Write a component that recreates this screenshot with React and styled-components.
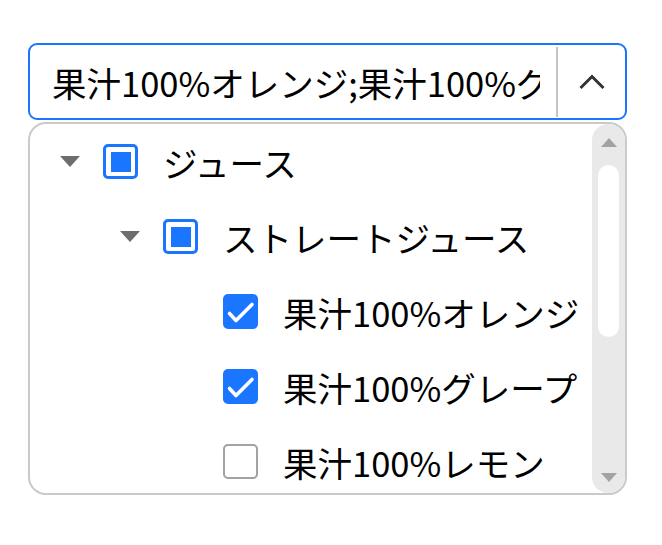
import React from 'react';
import styled, { createGlobalStyle } from 'styled-components';

const Global = createGlobalStyle`
    body {
        margin: 0;
        background: #ffffff;
        font-family: 'Noto Sans CJK JP', 'Noto Sans', sans-serif;
    }
`
const Wrapper = styled.div`
    width: 599px;
    padding: 43px 0 0 28px;
`
const SelectBox = styled.div`
    display: flex;
    align-items: stretch;
    height: 77px;
    box-sizing: border-box;
    border: 2px solid #1b76ff;
    border-radius: 9px;
    background: white;
`
const Value = styled.div`
    flex: 1;
    display: flex;
    align-items: center;
    margin: 0 16px 0 22px;
    overflow: hidden;
    white-space: nowrap;
    font-size: 34.5px;
    color: #000;
`
const Divider = styled.div`
    width: 2px;
    margin: 2px 0 1px;
    background: #c4c4c4;
`
const Toggle = styled.div`
    width: 67px;
    display: flex;
    align-items: center;
    justify-content: center;
`
const Dropdown = styled.div`
    display: flex;
    margin-top: 2px;
    height: 373px;
    box-sizing: border-box;
    border: 2px solid #cacaca;
    border-radius: 18px;
    overflow: hidden;
    background: white;
`
const List = styled.div`
    flex: 1;
    overflow: hidden;
`
const Row = styled.div`
    display: flex;
    align-items: center;
    height: 75px;
    padding-left: ${p => 30 + p.$depth * 60}px;
    font-size: 34.5px;
    color: #000;
    white-space: nowrap;
`
const Caret = styled.span`
    width: 20px;
    height: 11px;
    margin-right: 23px;
    flex-shrink: 0;
    box-sizing: border-box;
    border-left: 10px solid transparent;
    border-right: 10px solid transparent;
    border-top: 11px solid ${p => p.$leaf ? 'transparent' : '#6e6e6e'};
`
const Box = styled.span`
    width: 35px;
    height: 35px;
    flex-shrink: 0;
    box-sizing: border-box;
    border-radius: 5px;
    display: flex;
    align-items: center;
    justify-content: center;
    background: ${p => p.$state === 'checked' ? '#1b76ff' : 'white'};
    border: ${p => p.$state === 'off' ? '2.5px solid #a2a2a2' : p.$state === 'mixed' ? '3px solid #1b76ff' : 'none'};
`
const Mixed = styled.span`
    width: 20px;
    height: 20px;
    background: #1b76ff;
`
const Label = styled.span`
    margin-left: 25px;
`
const Scrollbar = styled.div`
    width: 33px;
    display: flex;
    flex-direction: column;
    align-items: center;
    background: #e9e9e9;
    border-radius: 16px;
`
const Arrow = styled.div`
    height: ${p => p.$h}px;
    display: flex;
    align-items: center;
    justify-content: center;
    &::after {
        content: '';
        border-left: 8px solid transparent;
        border-right: 8px solid transparent;
        ${p => p.$up ? 'border-bottom' : 'border-top'}: 9px solid #a3a3a3;
    }
`
const Thumb = styled.div`
    width: 21px;
    height: 172px;
    margin-top: 5px;
    border-radius: 11px;
    background: white;
`
const Spacer = styled.div`
    flex: 1;
`

const Check = () => (
    <svg width="35" height="35" viewBox="0 0 35 35">
        <path d="M6.5 19.5 L13 26.5 L29 10.5" fill="none" stroke="white" strokeWidth="3.6" strokeLinecap="round" strokeLinejoin="round" />
    </svg>
)

const items = [
    { depth: 0, label: 'ジュース', state: 'mixed', parent: true },
    { depth: 1, label: 'ストレートジュース', state: 'mixed', parent: true },
    { depth: 2, label: '果汁100%オレンジ', state: 'checked' },
    { depth: 2, label: '果汁100%グレープ', state: 'checked' },
    { depth: 2, label: '果汁100%レモン', state: 'off' },
    { depth: 2, label: '果汁100%りんご', state: 'off' },
]

const App = () => {
    const selected = items.filter(x => x.state === 'checked').map(x => x.label).join(';')
    return (
        <Wrapper>
            <Global />
            <SelectBox>
                <Value>{selected}</Value>
                <Divider />
                <Toggle>
                    <svg width="28" height="16" viewBox="0 0 28 16">
                        <path d="M2.5 14 L14 2.5 L25.5 14" fill="none" stroke="#333" strokeWidth="3" />
                    </svg>
                </Toggle>
            </SelectBox>
            <Dropdown>
                <List>
                    {items.map((item, i) => (
                        <Row $depth={item.depth} key={i}>
                            <Caret $leaf={!item.parent} />
                            <Box $state={item.state}>
                                {item.state === 'checked' ? <Check /> : null}
                                {item.state === 'mixed' ? <Mixed /> : null}
                            </Box>
                            <Label>{item.label}</Label>
                        </Row>
                    ))}
                </List>
                <Scrollbar>
                    <Arrow $up $h={36} />
                    <Thumb />
                    <Spacer />
                    <Arrow $h={32} />
                </Scrollbar>
            </Dropdown>
        </Wrapper>
    );
}

export default App;
